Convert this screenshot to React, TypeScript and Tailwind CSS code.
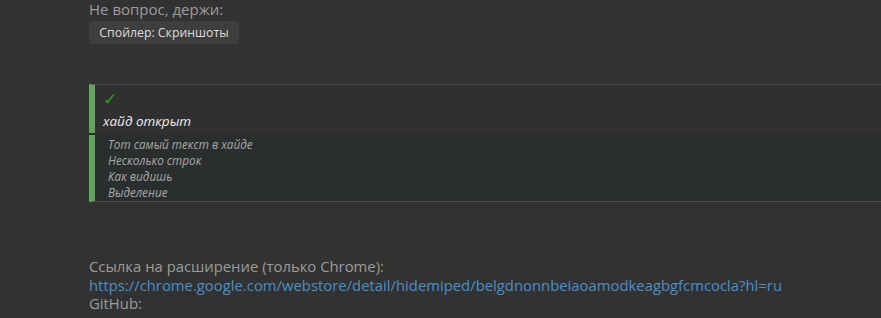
export default function App() {
	return (
		<div className="w-[881px] h-[318px] overflow-hidden bg-[#323232] font-['Open_Sans',sans-serif] pl-[89px]">
			<div className="text-[15px] leading-[18px] text-[#9c9c9c]">Не вопрос, держи:</div>
			<button className="mt-[3px] h-[23px] w-[150px] bg-[#3e3e3e] text-[12.3px] text-[#dcdcdc] rounded-[2px] flex items-center justify-center pt-px">
				Спойлер: Скриншоты
			</button>

			<div className="mt-[40px] w-[820px] border-y border-[#4d4d4d] border-l-[6px] border-l-[#62a55b]">
				<div className="h-[50px] bg-[#303030] pl-[8px] pt-[6px] relative">
					<div className="text-[#2f9a2a] text-[17px] leading-[16px]">✓</div>
					<div className="italic text-[13.5px] leading-[20px] text-[#ececec] mt-[4px]">хайд открыт</div>
					<div className="absolute -left-[6px] bottom-0 w-[6px] h-[2px] bg-[#253025]" />
				</div>
				<div className="h-px bg-[#2a2a2a]" />
				<div className="bg-[#2b2e2f] pl-[13px] pb-[1px] italic text-[11.7px] leading-[16px] text-[#a8a8a8]">
					<div>Тот самый текст в хайде</div>
					<div>Несколько строк</div>
					<div>Как видишь</div>
					<div>Выделение</div>
				</div>
			</div>

			<div className="mt-[55px] text-[14.85px] leading-[18.5px] text-[#9c9c9c]">
				<div>Ссылка на расширение (только Chrome):</div>
				<a className="text-[#4b8fc6]" href="#">https://chrome.google.com/webstore/detail/hidemiped/belgdnonnbeiaoamodkeagbgfcmcocla?hl=ru</a>
				<div>GitHub:</div>
			</div>
		</div>
	);
}
